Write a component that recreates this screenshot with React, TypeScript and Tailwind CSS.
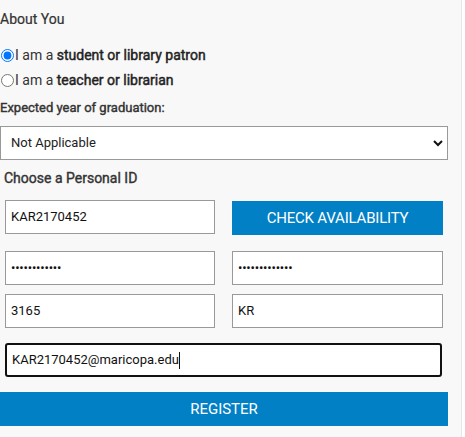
import React from "react";

export default function App() {
  const font = { fontFamily: "Roboto, 'Liberation Sans', sans-serif" };
  return (
    <div className="w-[465px] h-[437px] bg-white flex" style={font}>
      <div className="w-[462px] h-full bg-[#f8f8f8] border-r border-[#e6e6e6] text-[#333]">
        <div className="pt-[9px] h-[20px] box-content text-[14px] leading-[20px] [-webkit-text-stroke:0.2px_#333]">About You</div>
        <div className="mt-[16px] flex flex-col gap-[5px]">
          <label className="flex items-center h-[20px] text-[14px]">
            <input type="radio" name="r" defaultChecked className="m-0 w-[13px] h-[13px] ml-[1px] mr-[1px] accent-[#0075ff]" />
            <span>I am a <span className="text-[#222] [-webkit-text-stroke:0.45px_#222]">student or library patron</span></span>
          </label>
          <label className="flex items-center h-[20px] text-[14px]">
            <input type="radio" name="r" className="m-0 w-[13px] h-[13px] ml-[1px] mr-[1px]" />
            <span>I am a <span className="text-[#222] [-webkit-text-stroke:0.45px_#222]">teacher or librarian</span></span>
          </label>
        </div>
        <div className="mt-[8px] h-[20px] leading-[20px] text-[13px] text-[#333] [-webkit-text-stroke:0.4px_#333]">Expected year of graduation:</div>
        <div className="mt-[8px] w-[448px] h-[34px] bg-white border border-[#999] flex items-center justify-between pl-[10px] pr-[4px] text-[13px] text-[#222]">
          <span>Not Applicable</span>
          <svg width="10" height="10" viewBox="0 0 10 10"><path d="M1 3 L5 7 L9 3" stroke="#111" strokeWidth="2" fill="none" /></svg>
        </div>
        <div className="mt-[8px] ml-[4px] h-[20px] leading-[20px] text-[14px] text-[#333] [-webkit-text-stroke:0.4px_#333]">Choose a Personal ID</div>
        <div className="mt-[12px] ml-[5px] flex flex-col">
          <div className="flex gap-[17px]">
            <div className="w-[210px] h-[34px] bg-white border border-[#999] flex items-center px-[5px] text-[13px] text-[#111]">KAR2170452</div>
            <div className="w-[211px] h-[34px] mt-[1px] bg-[#0280c6] text-white text-[15px] tracking-[-0.2px] flex items-center justify-center">CHECK AVAILABILITY</div>
          </div>
          <div className="flex gap-[17px] mt-[16px]">
            <div className="w-[210px] h-[34px] bg-white border border-[#999] flex items-center px-[5px] text-[13px] text-[#111] tracking-[-0.2px]">••••••••••••</div>
            <div className="w-[211px] h-[34px] bg-white border border-[#999] flex items-center px-[5px] text-[13px] text-[#111] tracking-[-0.2px]">•••••••••••••</div>
          </div>
          <div className="flex gap-[17px] mt-[9px]">
            <div className="w-[210px] h-[34px] bg-white border border-[#999] flex items-center px-[5px] text-[13px] text-[#111]">3165</div>
            <div className="w-[211px] h-[34px] bg-white border border-[#999] flex items-center px-[5px] text-[13px] text-[#111]">KR</div>
          </div>
          <div className="mt-[15px] w-[437px] h-[34px] bg-white border-2 border-[#111] rounded-[3px] flex items-center px-[5px] text-[13px] text-[#111]">
            <span>KAR2170452@maricopa.edu</span><span className="w-[1px] h-[17px] bg-[#111]" />
          </div>
        </div>
        <div className="mt-[15px] w-[448px] h-[34px] bg-[#0280c6] text-white text-[15px] flex items-center justify-center">REGISTER</div>
      </div>
    </div>
  );
}
